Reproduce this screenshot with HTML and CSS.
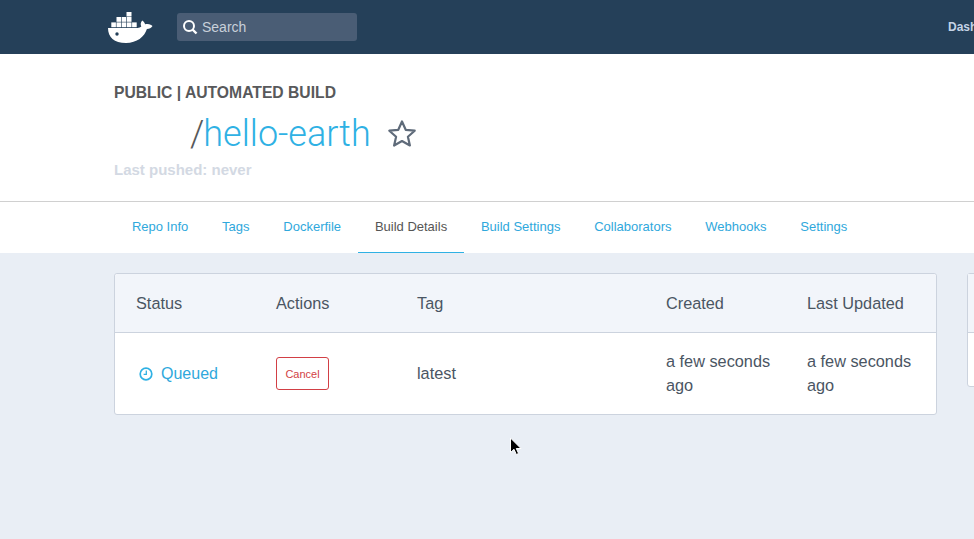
FILE: index.html
```html
<!DOCTYPE html>
<html lang="en">
<head>
    <meta charset="UTF-8">
    <title>hello-earth - Build Details</title>
    <link rel="stylesheet" href="styles.css">
</head>
<body>

    <!-- Top bar -->
    <header class="topbar">
        <svg class="logo" width="46" height="32" viewBox="0 0 46 32">
            <g fill="#fff">
                <rect x="18.500" y="0" width="5" height="4.500"/>
                <rect x="8.500" y="5" width="4.600" height="4.800"/><rect x="13.700" y="5" width="4.600" height="4.800"/><rect x="18.900" y="5" width="4.600" height="4.800"/>
                <rect x="3.300" y="10.400" width="4.600" height="4.800"/><rect x="8.500" y="10.400" width="4.600" height="4.800"/><rect x="13.700" y="10.400" width="4.600" height="4.800"/><rect x="18.900" y="10.400" width="4.600" height="4.800"/><rect x="24.100" y="10.400" width="4.600" height="4.800"/>
                <path d="M0 16h29.500c1.600 0 3-.5 3.800-1.400-1-2-.8-4.300.9-6.100 1.500.9 2.600 2.300 2.900 3.800 2-.6 4.300-.3 6 .8l1.400 1c-1.100 2.100-3.200 3-5.600 3C36.500 25 29 31 18 31 6 31 0 25 0 16z"/>
            </g>
            <circle cx="9" cy="22" r="1.700" fill="#254059"/>
        </svg>
        <div class="search">
            <svg width="16" height="16" viewBox="0 0 16 16" fill="none" stroke="#fff">
                <circle cx="7" cy="7" r="5" stroke-width="2"/>
                <path d="M10.500 10.500l4 4" stroke-width="2.400"/>
            </svg>
            <span>Search</span>
        </div>
        <a class="topbar-link">Dashboard</a>
    </header>

    <!-- Repo title -->
    <section class="repo-head">
        <div class="repo-type">PUBLIC | AUTOMATED BUILD</div>
        <div class="repo-name">
            <span class="slash">/</span><span class="name">hello-earth</span>
            <svg class="star" width="30" height="30" viewBox="0 0 30 30" fill="none" stroke="#5f6b7a" stroke-width="2.200" stroke-linejoin="round">
                <path d="M15 2.500l3.700 8.300 9 .9-6.800 6 2 8.800L15 22l-7.900 4.500 2-8.800-6.800-6 9-.9z"/>
            </svg>
        </div>
        <div class="last-pushed">Last pushed: never</div>
    </section>

    <!-- Tabs -->
    <nav class="tabs">
        <a>Repo Info</a>
        <a>Tags</a>
        <a>Dockerfile</a>
        <a class="active">Build Details</a>
        <a>Build Settings</a>
        <a>Collaborators</a>
        <a>Webhooks</a>
        <a>Settings</a>
    </nav>

    <main class="content">
        <div class="card builds">
            <div class="row head">
                <div class="col-status">Status</div>
                <div class="col-actions">Actions</div>
                <div class="col-tag">Tag</div>
                <div class="col-created">Created</div>
                <div class="col-updated">Last Updated</div>
            </div>
            <div class="row body-row">
                <div class="col-status queued">
                    <svg width="14" height="14" viewBox="0 0 14 14" fill="none" stroke="#2fb1e4">
                        <circle cx="7" cy="7" r="5.800" stroke-width="1.700"/>
                        <path d="M7.300 3.600v3.700H4.600" stroke-width="1.300"/>
                    </svg>
                    Queued
                </div>
                <div class="col-actions"><button class="cancel">Cancel</button></div>
                <div class="col-tag">latest</div>
                <div class="col-created">a few seconds ago</div>
                <div class="col-updated">a few seconds ago</div>
            </div>
        </div>

        <!-- Second card, cut off by the window -->
        <div class="card side">
            <div class="side-head"></div>
        </div>
    </main>

    <!-- Mouse pointer -->
    <svg class="pointer" width="14" height="20" viewBox="0 0 14 20">
        <path d="M1.500 1v14.500l3.500-3.200 2.300 5.200 2.300-1-2.300-5h4.700z" fill="#000" stroke="#fff" stroke-width="1"/>
    </svg>

</body>
</html>
```

FILE: styles.css
```css
html, body {
    height: 100%;
}

body {
    margin: 0;
    overflow: hidden;
    position: relative;
    font-family: "Liberation Sans", Arial, sans-serif;
    background-color: #e9eef5;
    color: #4a5563;
}

/* Top bar */
.topbar {
    height: 54px;
    box-sizing: border-box;
    background-color: #254059;
    display: flex;
    align-items: center;
    padding-left: 108px;
}

.logo {
    flex: none;
    margin-top: 1px;
}

.search {
    flex: none;
    box-sizing: border-box;
    width: 180px;
    height: 28px;
    margin-left: 23px;
    padding-left: 5px;
    background-color: #4a5d75;
    border-radius: 3px;
    display: flex;
    align-items: center;
    gap: 4px;
    color: #c8d0da;
    font-size: 14px;
}

.topbar-link {
    flex: none;
    margin-left: 591px;
    font-size: 12px;
    font-weight: bold;
    color: #c4d3e6;
}

/* Repo title */
.repo-head {
    height: 147px;
    box-sizing: border-box;
    background-color: #fff;
    padding: 30px 0 0 114px;
}

.repo-type {
    font-size: 15.700px;
    line-height: 18px;
    font-weight: bold;
    color: #58595b;
}

.repo-name {
    height: 46px;
    margin-top: 9px;
    padding-left: 76px;
    display: flex;
    align-items: center;
    font-family: Roboto, sans-serif;
    font-weight: 300;
    font-size: 36px;
}

.slash {
    color: #58595b;
}

.name {
    margin-left: -1px;
    color: #2fb1e4;
}

.star {
    margin-left: 16px;
}

.last-pushed {
    margin-top: 4px;
    font-size: 15px;
    font-weight: bold;
    color: #d3d9e3;
}

/* Tabs */
.tabs {
    height: 52px;
    box-sizing: border-box;
    background-color: #fff;
    border-top: 1px solid #d0d0d0;
    padding-left: 115px;
    display: flex;
    font-size: 13px;
}

.tabs a {
    padding: 0 16.900px;
    line-height: 50px;
    height: 50px;
    color: #2fa8dc;
}

.tabs a.active {
    color: #555;
    border-bottom: 1px solid #2fb1e4;
}

/* Cards */
.content {
    display: flex;
    gap: 30px;
    padding: 20px 0 0 114px;
    font-size: 16.300px;
}

.card {
    flex: none;
    box-sizing: border-box;
    background-color: #fff;
    border: 1px solid #ccd3de;
    border-radius: 3px;
}

.builds {
    width: 823px;
    height: 142px;
}

.side {
    width: 200px;
    height: 114px;
}

.side-head {
    height: 58px;
    background-color: #f2f5fa;
    border-bottom: 1px solid #ccd3de;
}

.row {
    display: flex;
    align-items: center;
    line-height: 24px;
}

.head {
    height: 59px;
    box-sizing: border-box;
    background-color: #f2f5fa;
    border-bottom: 1px solid #ccd3de;
    border-radius: 3px 3px 0 0;
}

.body-row {
    height: 79px;
}

.col-status {
    width: 161px;
    box-sizing: border-box;
    padding-left: 21px;
}

.col-actions {
    width: 141px;
}

.col-tag {
    width: 249px;
}

.col-created {
    width: 141px;
    padding-right: 20px;
    box-sizing: border-box;
}

.col-updated {
    width: 120px;
}

.queued {
    display: flex;
    align-items: center;
    gap: 8px;
    margin-top: 2px;
    padding-left: 24px;
    font-size: 16px;
    color: #2fa8dc;
}

.cancel {
    display: block;
    width: 53px;
    height: 33px;
    margin-top: 2px;
    padding: 0;
    background-color: #fff;
    border: 1px solid #d23f45;
    border-radius: 3px;
    color: #d23f45;
    font-family: "Liberation Sans", Arial, sans-serif;
    font-size: 11px;
}

/* Mouse pointer */
.pointer {
    position: absolute;
    left: 509px;
    top: 437px;
}
```
